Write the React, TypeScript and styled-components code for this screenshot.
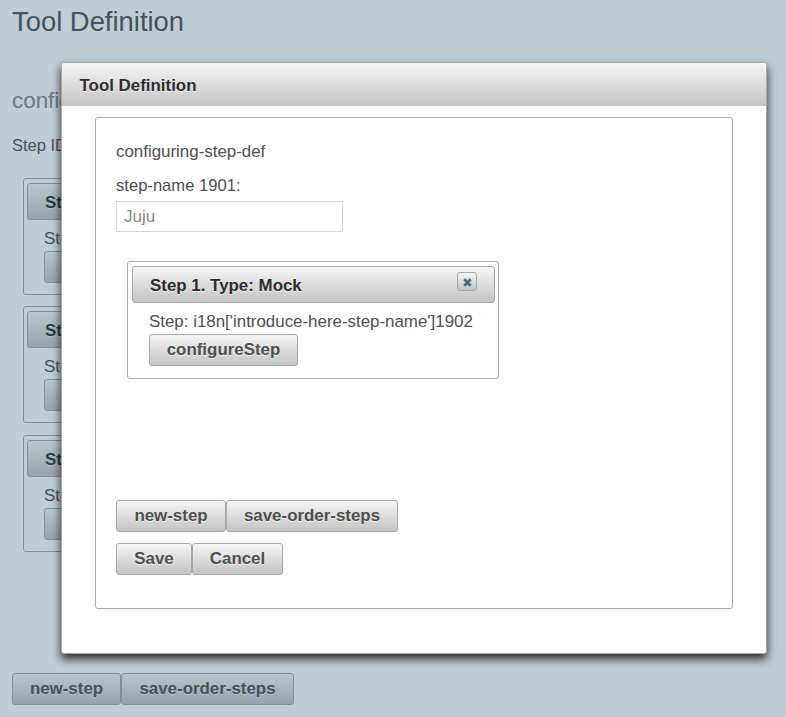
import React from "react";
import styled, { createGlobalStyle } from "styled-components";

const GlobalStyle = createGlobalStyle`
  *, *::before, *::after { box-sizing: border-box; }
  body {
    margin: 0;
    overflow: hidden;
    background: #fff;
    color: #4f4f4f;
    font-family: "Liberation Sans", Arial, sans-serif;
    font-size: 16.9px;
    line-height: 20px;
  }
`;

const Page = styled.main`
  position: relative;
  height: 717px;
  padding: 0 12px;
  overflow: hidden;
`;

const PageTitle = styled.h1`
  margin: 0;
  padding-top: 5px;
  font-size: 27.4px;
  font-weight: 400;
  line-height: 34px;
`;

const SectionTitle = styled.h2`
  margin: 49px 0 0;
  color: #898989;
  font-size: 22.4px;
  font-weight: 400;
  line-height: 26px;
`;

const Description = styled.p`
  margin: 21px 0 23px;
  font-size: 16.5px;
`;

const StepList = styled.div`
  display: flex;
  flex-direction: column;
  gap: 11.4px;
  height: 495px;
  padding-left: 11px;
`;

const StepPanel = styled.section`
  flex: none;
  width: 372px;
  height: 117px;
  padding: 4px 3px;
  border: 1px solid #a8a8a8;
  border-radius: 3px;
`;

const StepHeader = styled.header`
  display: flex;
  justify-content: space-between;
  height: 37px;
  padding: 9px 17px 0;
  border: 1px solid #a8a8a8;
  border-radius: 3px;
  background: linear-gradient(#f6f6f6, #c4c4c4);
  color: #2d2d2d;
  font-weight: 700;
  text-shadow: 0 1px 0 rgba(255, 255, 255, 0.7);
`;

const StepBody = styled.div`
  padding: 9px 17px 0;
  white-space: nowrap;
`;

const ButtonRow = styled.div`
  display: flex;
`;

const Button = styled.button<{ $width: number }>`
  width: ${({ $width }) => $width}px;
  height: 32px;
  margin: 0;
  padding: 0;
  border: 1px solid #a8a8a8;
  border-radius: 3px;
  background: linear-gradient(#f6f6f6, #c4c4c4);
  color: #4f4f4f;
  font: 700 16.9px/20px "Liberation Sans", Arial, sans-serif;
  text-shadow: 0 1px 0 rgba(255, 255, 255, 0.7);
  white-space: nowrap;
`;

const StepButton = styled(Button)`
  display: block;
  margin-top: 2px;
`;

const Overlay = styled.div`
  position: absolute;
  inset: 0;
  background: #2d5972;
  opacity: 0.3;
`;

const Dialog = styled.div`
  position: absolute;
  top: 62px;
  left: 61px;
  width: 706px;
  height: 592px;
  border: 1px solid #a8a8a8;
  border-radius: 3px;
  background: #fff;
  box-shadow: 0 5px 10px rgba(0, 0, 0, 0.8);
`;

const DialogTitle = styled.header`
  height: 43px;
  padding: 13px 17px 0 17.5px;
  border-radius: 2px 2px 0 0;
  background: linear-gradient(#f6f6f6, #c4c4c4);
  color: #2d2d2d;
  font-size: 16.9px;
  font-weight: 700;
  text-shadow: 0 1px 0 rgba(255, 255, 255, 0.7);
`;

const FormPanel = styled.form`
  width: 638px;
  height: 492px;
  margin: 11px 0 0 33px;
  padding: 24px 20px 0;
  border: 1px solid #a8a8a8;
  border-radius: 3px;
`;

const Label = styled.label`
  display: block;
  margin: 14px 0 5px;
  font-size: 16.6px;
`;

const TextInput = styled.input`
  display: block;
  width: 227px;
  height: 31px;
  padding: 0 7px;
  border: 1px solid #d5d5d5;
  outline: none;
  background: #fff;
  color: #888;
  font: 17px "Liberation Sans", Arial, sans-serif;
`;

const EditableSteps = styled.div`
  height: 239px;
  margin: 29px 0 0 11px;

  ${StepPanel} { height: 118px; padding: 4px 3px 4px 4px; }
`;

const Actions = styled.div`
  display: grid;
  gap: 11px;
`;

const CloseButton = styled.button`
  display: grid;
  place-items: center;
  width: 20px;
  height: 19px;
  margin-top: -4px;
  padding: 1px 0 0 1px;
  border: 1px solid #a8a8a8;
  border-radius: 3px;
  background: linear-gradient(#f6f6f6, #c4c4c4);
`;

function Step({ number, name, closable = false }: { number: number; name: string; closable?: boolean }) {
  return (
    <StepPanel>
      <StepHeader>
        Step {number}. Type: Mock
        {closable && (
          <CloseButton type="button" aria-label="Close">
            <svg width="9" height="9" viewBox="0 0 9 9">
              <path d="M1.3 1.3 7.7 7.7M7.7 1.3 1.3 7.7" stroke="#457088" strokeWidth="2.9" />
            </svg>
          </CloseButton>
        )}
      </StepHeader>
      <StepBody>
        {name}
        <StepButton type="button" $width={149}>configureStep</StepButton>
      </StepBody>
    </StepPanel>
  );
}

export default function App() {
  return (
    <Page>
      <GlobalStyle />
      <PageTitle>Tool Definition</PageTitle>
      <SectionTitle>configuring</SectionTitle>
      <Description>Step ID</Description>
      <StepList>
        {[1, 2, 3].map((n) => <Step key={n} number={n} name="Step:" />)}
      </StepList>
      <ButtonRow>
        <Button $width={109}>new-step</Button>
        <Button $width={173}>save-order-steps</Button>
      </ButtonRow>
      <Overlay />
      <Dialog role="dialog">
        <DialogTitle>Tool Definition</DialogTitle>
        <FormPanel>
          <div>configuring-step-def</div>
          <Label htmlFor="step-name">step-name 1901:</Label>
          <TextInput id="step-name" defaultValue="Juju" />
          <EditableSteps>
            <Step number={1} name="Step: i18n['introduce-here-step-name']1902" closable />
          </EditableSteps>
          <Actions>
            <ButtonRow>
              <Button type="button" $width={110}>new-step</Button>
              <Button type="button" $width={172}>save-order-steps</Button>
            </ButtonRow>
            <ButtonRow>
              <Button type="button" $width={76}>Save</Button>
              <Button type="button" $width={91}>Cancel</Button>
            </ButtonRow>
          </Actions>
        </FormPanel>
      </Dialog>
    </Page>
  );
}
